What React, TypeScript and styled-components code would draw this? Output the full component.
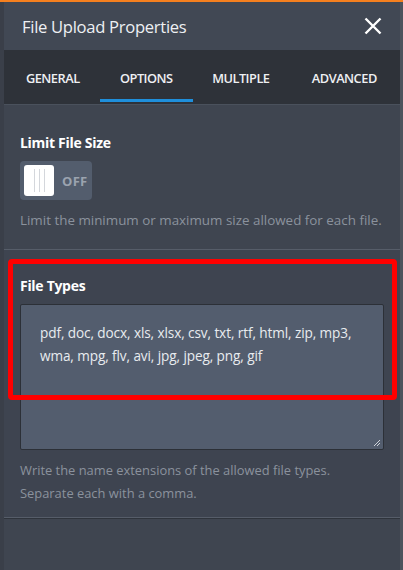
import React from "react";
import styled, { createGlobalStyle } from "styled-components";

const Global = createGlobalStyle`
  html, body { margin: 0; padding: 0; background: #3a3f49; }
  body { font-family: "Open Sans", "Noto Sans", sans-serif; }
  * { box-sizing: border-box; }
`;

const Page = styled.div`
  width: 403px;
  height: 570px;
  display: flex;
  flex-direction: column;
  background: #3a3f49;
  overflow: hidden;
  position: relative;
`;

const TopBar = styled.div`
  height: 2px;
  background: #f5801f;
  flex: none;
`;

const Frame = styled.div`
  flex: 1;
  display: flex;
  margin-left: 4px;
  margin-right: 3px;
  flex-direction: column;
  background: #3f4550;
  box-shadow: 3px 0 0 #4c525c;
`;

const Header = styled.div`
  height: 48px;
  display: flex;
  align-items: center;
  justify-content: space-between;
  padding: 0 16px 0 18px;
  background: #414854;
`;

const Title = styled.div`
  color: #eef0f3;
  font-size: 16.6px;
  letter-spacing: -0.3px;
`;

const Close = styled.button`
  border: 0;
  background: transparent;
  padding: 0;
  width: 22px;
  height: 22px;
  display: flex;
  align-items: center;
  justify-content: center;
  cursor: pointer;
`;

const Tabs = styled.div`
  height: 55px;
  display: flex;
  align-items: stretch;
  background: #2e3239;
  border-bottom: 1px solid #4a515c;
  padding-left: 2px;
`;

const Tab = styled.div<{ $active?: boolean; $w: number }>`
  width: ${(p) => p.$w}px;
  display: flex;
  align-items: center;
  justify-content: center;
  color: #eef0f3;
  font-size: 12.8px;
  font-weight: 600;
  letter-spacing: -0.5px;
  position: relative;
  padding-top: 1px;
  &::after {
    content: "";
    display: ${(p) => (p.$active ? "block" : "none")};
    position: absolute;
    left: 0;
    right: 0;
    bottom: 2px;
    height: 3px;
    background: #1f8fdb;
  }
`;

const Section = styled.div<{ $bg?: string; $top: number; $bottom: number }>`
  padding: ${(p) => p.$top}px 16px ${(p) => p.$bottom}px 16px;
  border-bottom: 1px solid #565d69;
  background: ${(p) => p.$bg || "#3f4550"};
  box-shadow: 0 1px 0 #2f343c;
`;

const Label = styled.div`
  color: #ffffff;
  font-size: 14px;
  font-weight: 700;
  letter-spacing: -0.3px;
  margin-bottom: 9px;
`;

const Toggle = styled.div`
  width: 72px;
  height: 39px;
  border-radius: 4px;
  background: #535d6d;
  display: flex;
  align-items: center;
  padding: 4px;
  gap: 8px;
`;

const Knob = styled.div`
  width: 30px;
  height: 31px;
  background: #ffffff;
  border-radius: 3px;
  display: flex;
  justify-content: center;
  gap: 4px;
  padding: 4px 0;
`;

const Bar = styled.span`
  width: 1px;
  background: #d4d7dc;
`;

const Off = styled.span`
  color: #9ba3af;
  font-size: 13px;
  font-weight: 700;
  letter-spacing: 0.3px;
`;

const Help = styled.div<{ $size: number }>`
  color: #8b929d;
  font-size: ${(p) => p.$size}px;
  line-height: 23px;
  margin-top: 9px;
`;

const TextArea = styled.div`
  height: 146px;
  background: #535d6e;
  border: 1px solid #2c3037;
  border-radius: 2px;
  padding: 16px 18px 16px 19px;
  color: #e8ebef;
  font-size: 13.6px;
  line-height: 23px;
  letter-spacing: -0.1px;
  position: relative;
`;

const Grip = styled.svg`
  position: absolute;
  right: 2px;
  bottom: 2px;
`;

const Highlight = styled.div`
  position: absolute;
  left: 8px;
  top: 259px;
  width: 389px;
  height: 141px;
  border: 5px solid #ff0000;
  border-radius: 4px;
  pointer-events: none;
`;

export default function App() {
  return (
    <>
      <Global />
      <Page>
        <TopBar />
        <Frame>
          <Header>
            <Title>File Upload Properties</Title>
            <Close aria-label="close">
              <svg width="18" height="18" viewBox="0 0 18 18">
                <path d="M1.5 1.5 L16.5 16.5 M16.5 1.5 L1.5 16.5" stroke="#ffffff" strokeWidth="2.4" />
              </svg>
            </Close>
          </Header>
          <Tabs>
            <Tab $w={94}>GENERAL</Tab>
            <Tab $w={94} $active>OPTIONS</Tab>
            <Tab $w={96}>MULTIPLE</Tab>
            <Tab $w={112}>ADVANCED</Tab>
          </Tabs>
          <Section $top={28} $bottom={17}>
            <Label>Limit File Size</Label>
            <Toggle>
              <Knob>
                <Bar />
                <Bar />
                <Bar />
              </Knob>
              <Off>OFF</Off>
            </Toggle>
            <Help $size={13.4}>Limit the minimum or maximum size allowed for each file.</Help>
          </Section>
          <Section $bg="#3e4450" $top={26} $bottom={12}>
            <Label>File Types</Label>
            <TextArea>
              pdf, doc, docx, xls, xlsx, csv, txt, rtf, html, zip, mp3, wma, mpg, flv, avi, jpg, jpeg, png, gif
              <Grip width="8" height="8" viewBox="0 0 8 8">
                <path d="M1 7 L7 1 M4 7 L7 4" stroke="#d0d4da" strokeWidth="1" />
              </Grip>
            </TextArea>
            <Help $size={12.9}>
              Write the name extensions of the allowed file types.
              <br />
              Separate each with a comma.
            </Help>
          </Section>
        </Frame>
        <Highlight />
      </Page>
    </>
  );
}
